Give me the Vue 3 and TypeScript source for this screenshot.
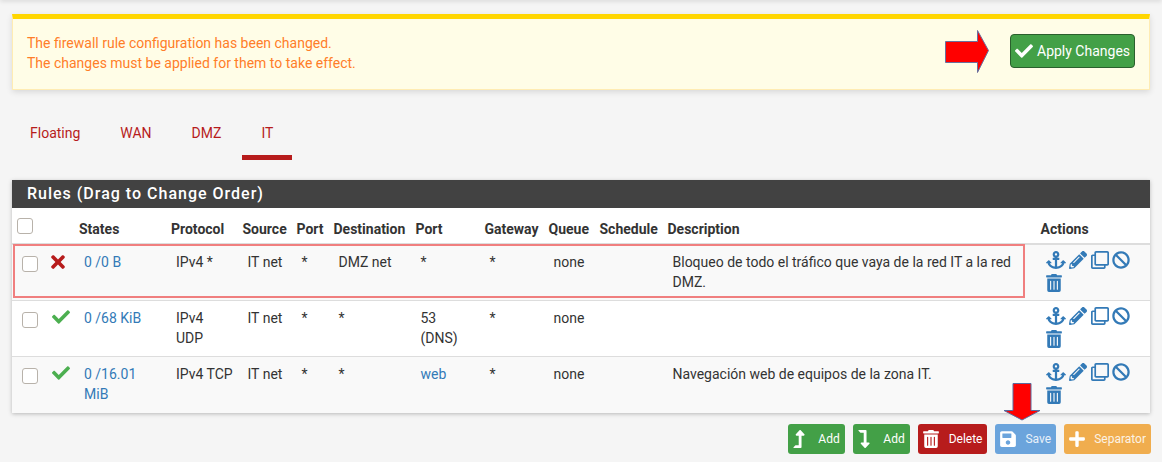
<script setup lang="ts">
const P = {
  check: 'M173.898 439.404l-166.4-166.4c-9.997-9.997-9.997-26.206 0-36.204l36.203-36.204c9.997-10.998 26.207-9.998 36.204 0L192 312.69 432.095 72.596c9.997-9.997 26.207-9.997 36.204 0l36.203 36.204c9.997 9.997 9.997 26.206 0 36.204l-294.4 294.401c-9.998 9.997-26.207 9.997-36.204-.001z',
  times: 'M242.72 256l100.07-100.07c12.28-12.28 12.28-32.19 0-44.48l-22.24-22.24c-12.28-12.28-32.19-12.28-44.48 0L176 189.28 75.93 89.21c-12.28-12.28-32.19-12.28-44.48 0L9.21 111.45c-12.28 12.28-12.28 32.19 0 44.48L109.28 256 9.21 356.07c-12.28 12.28-12.28 32.19 0 44.48l22.24 22.24c12.28 12.28 32.2 12.28 44.48 0L176 322.72l100.07 100.07c12.28 12.28 32.2 12.28 44.48 0l22.24-22.24c12.28-12.28 12.28-32.19 0-44.48L242.72 256z',
  anchor: 'M12.971 352h32.394C67.172 454.735 181.944 512 288 512c106.229 0 220.853-57.38 242.635-160h32.394c10.691 0 16.045-12.926 8.485-20.485l-67.029-67.029c-4.686-4.686-12.284-4.686-16.971 0l-67.029 67.029c-7.56 7.56-2.206 20.485 8.485 20.485h35.146c-20.29 54.317-84.963 86.588-144.117 94.015V256h52c6.627 0 12-5.373 12-12v-40c0-6.627-5.373-12-12-12h-52v-5.47c37.281-13.178 63.995-48.725 64-90.518C384.005 43.772 341.605.738 289.37.01 235.723-.739 192 42.525 192 96c0 41.798 26.716 77.35 64 90.53V192h-52c-6.627 0-12 5.373-12 12v40c0 6.627 5.373 12 12 12h52v190.015c-58.936-7.399-123.82-39.679-144.117-94.015h35.146c10.691 0 16.045-12.926 8.485-20.485l-67.029-67.029c-4.686-4.686-12.284-4.686-16.971 0L4.485 331.515C-3.074 339.074 2.28 352 12.971 352zM288 64c17.645 0 32 14.355 32 32s-14.355 32-32 32-32-14.355-32-32 14.355-32 32-32z',
  pencil: 'M497.9 142.1l-46.1 46.1c-4.7 4.7-12.3 4.7-17 0l-111-111c-4.7-4.7-4.7-12.3 0-17l46.1-46.1c18.7-18.7 49.1-18.7 67.9 0l60.1 60.1c18.8 18.7 18.8 49.1 0 68zM284.2 99.8L21.6 362.4.4 483.9c-2.9 16.4 11.4 30.6 27.8 27.8l121.5-21.3 262.6-262.6c4.7-4.7 4.7-12.3 0-17l-111-111c-4.8-4.7-12.4-4.7-17.1 0zM124.1 339.9c-5.5-5.5-5.5-14.3 0-19.8l154-154c5.5-5.5 14.3-5.5 19.8 0s5.5 14.3 0 19.8l-154 154c-5.5 5.5-14.3 5.5-19.8 0zM88 424h48v36.3l-64.5 11.3-31.1-31.1L51.7 376H88v48z',
  clone: 'M464 0H144c-26.51 0-48 21.49-48 48v48H48c-26.51 0-48 21.49-48 48v320c0 26.51 21.49 48 48 48h320c26.51 0 48-21.49 48-48v-48h48c26.51 0 48-21.49 48-48V48c0-26.51-21.49-48-48-48zM362 464H54a6 6 0 0 1-6-6V150a6 6 0 0 1 6-6h42v224c0 26.51 21.49 48 48 48h224v42a6 6 0 0 1-6 6zm96-96H150a6 6 0 0 1-6-6V54a6 6 0 0 1 6-6h308a6 6 0 0 1 6 6v308a6 6 0 0 1-6 6z',
  ban: 'M256 8C119.034 8 8 119.033 8 256s111.034 248 248 248 248-111.034 248-248S392.967 8 256 8zm130.108 117.892c65.448 65.448 70 165.481 20.677 235.637L150.47 105.216c70.204-49.356 170.226-44.735 235.638 20.676zM125.892 386.108c-65.448-65.448-70-165.481-20.677-235.637L361.53 406.784c-70.203 49.356-170.226 44.736-235.638-20.676z',
  trash: 'M32 464a48 48 0 0 0 48 48h288a48 48 0 0 0 48-48V128H32zm272-256a16 16 0 0 1 32 0v224a16 16 0 0 1-32 0zm-96 0a16 16 0 0 1 32 0v224a16 16 0 0 1-32 0zm-96 0a16 16 0 0 1 32 0v224a16 16 0 0 1-32 0zM432 32H312l-9.4-18.7A24 24 0 0 0 281.1 0H166.8a23.72 23.72 0 0 0-21.4 13.3L136 32H16A16 16 0 0 0 0 48v32a16 16 0 0 0 16 16h416a16 16 0 0 0 16-16V48a16 16 0 0 0-16-16z',
  up: 'M313.553 119.669L209.587 7.666c-9.485-10.214-25.676-10.229-35.174 0L70.438 119.669C56.232 134.969 67.062 160 88.025 160H152v272H68.024a11.996 11.996 0 0 0-8.485 3.515l-56 56C-4.021 499.074 1.333 512 12.024 512h196c13.255 0 24-10.745 24-24V160h63.966c20.878 0 31.851-24.969 17.563-40.331z',
  down: 'M313.553 392.331L209.587 504.334c-9.485 10.214-25.676 10.229-35.174 0L70.438 392.331C56.232 377.031 67.062 352 88.025 352H152V80H68.024a11.996 11.996 0 0 1-8.485-3.515l-56-56C-4.021 12.926 1.333 0 12.024 0h196c13.255 0 24 10.745 24 24v328h63.966c20.878 0 31.851 24.969 17.563 40.331z',
  plus: 'M416 208H272V64c0-17.67-14.33-32-32-32h-32c-17.67 0-32 14.33-32 32v144H32c-17.67 0-32 14.33-32 32v32c0 17.67 14.33 32 32 32h144v144c0 17.67 14.33 32 32 32h32c17.67 0 32-14.33 32-32V304h144c17.67 0 32-14.33 32-32v-32c0-17.67-14.33-32-32-32z',
  save: 'M433.941 129.941l-83.882-83.882A48 48 0 0 0 316.118 32H48C21.49 32 0 53.49 0 80v352c0 26.51 21.49 48 48 48h352c26.51 0 48-21.49 48-48V163.882a48 48 0 0 0-14.059-33.941zM224 416c-35.346 0-64-28.654-64-64 0-35.346 28.654-64 64-64s64 28.654 64 64c0 35.346-28.654 64-64 64zm96-304.52V212c0 6.627-5.373 12-12 12H76c-6.627 0-12-5.373-12-12V108c0-6.627 5.373-12 12-12h228.52c3.183 0 6.235 1.264 8.485 3.515l3.48 3.48A11.996 11.996 0 0 1 320 111.48z',
}

const tabs = ['Floating', 'WAN', 'DMZ', 'IT']
const headers = ['', '', 'States', 'Protocol', 'Source', 'Port', 'Destination', 'Port', 'Gateway', 'Queue', 'Schedule', 'Description', 'Actions']
const widths = [32, 30, 92, 71.5, 54, 37, 82, 69, 64, 51, 68, 373, 114.5]

const rows = [
  { ok: false, states: '0 /0 B', proto: 'IPv4 *', source: 'IT net', sport: '*', dest: 'DMZ net', port: '*', portLink: false, desc: 'Bloqueo de todo el tráfico que vaya de la red IT a la red DMZ.' },
  { ok: true, states: '0 /68 KiB', proto: 'IPv4\nUDP', source: 'IT net', sport: '*', dest: '*', port: '53 (DNS)', portLink: false, desc: '' },
  { ok: true, states: '0 /16.01 MiB', proto: 'IPv4 TCP', source: 'IT net', sport: '*', dest: '*', port: 'web', portLink: true, desc: 'Navegación web de equipos de la zona IT.' },
]
const actions = [
  { path: P.anchor, cls: 'a-anchor', vb: '0 0 576 512' },
  { path: P.pencil, cls: 'a-pencil', vb: '0 0 512 512' },
  { path: P.clone, cls: 'a-clone', vb: '0 0 512 512' },
  { path: P.ban, cls: 'a-ban', vb: '0 0 512 512' },
  { path: P.trash, cls: 'a-trash', vb: '0 0 448 512' },
]
const buttons = [
  { label: 'Add', cls: 'green', path: P.up, vb: '0 0 320 512', ic: 'ic-narrow' },
  { label: 'Add', cls: 'green', path: P.down, vb: '0 0 320 512', ic: 'ic-narrow' },
  { label: 'Delete', cls: 'red', path: P.trash, vb: '0 0 448 512', ic: '' },
  { label: 'Save', cls: 'blue', path: P.save, vb: '0 0 448 512', ic: '' },
  { label: 'Separator', cls: 'orange', path: P.plus, vb: '0 0 448 512', ic: '' },
]
</script>

<template>
  <div class="page">
    <div class="topline"></div>

    <div class="alert">
      <div class="alert-text">
        The firewall rule configuration has been changed.<br />
        The changes must be applied for them to take effect.
      </div>
      <button class="apply" type="button">
        <svg class="apply-icon" viewBox="0 0 512 512"><path :d="P.check" fill="currentColor" /></svg>
        Apply Changes
      </button>
      <svg class="arrow-right" viewBox="0 0 44 44">
        <polygon points="0.5,11.5 32.5,11.5 32.5,0.5 43.5,20.5 32.5,42.5 32.5,32.5 0.5,32.5" fill="#ff0000" stroke="#6a6f9e" stroke-width="1" />
      </svg>
    </div>

    <nav class="tabs">
      <a v-for="t in tabs" :key="t" class="tab" :class="{ active: t === 'IT' }">{{ t }}</a>
    </nav>

    <section class="panel">
      <h2 class="panel-title">Rules (Drag to Change Order)</h2>
      <table class="rules">
        <colgroup>
          <col v-for="(w, i) in widths" :key="i" :style="{ width: w + 'px' }" />
        </colgroup>
        <thead>
          <tr>
            <th v-for="(h, i) in headers" :key="i">
              <span v-if="i === 0" class="cb"></span>
              <template v-else>{{ h }}</template>
            </th>
          </tr>
        </thead>
        <tbody>
          <tr v-for="(r, i) in rows" :key="i">
            <td><span class="cb"></span></td>
            <td class="status">
              <svg v-if="r.ok" class="ok" viewBox="0 0 512 512"><path :d="P.check" fill="currentColor" /></svg>
              <svg v-else class="no" viewBox="0 0 352 512"><path :d="P.times" fill="currentColor" /></svg>
            </td>
            <td><a class="link">{{ r.states }}</a></td>
            <td class="proto">{{ r.proto }}</td>
            <td>{{ r.source }}</td>
            <td>{{ r.sport }}</td>
            <td>{{ r.dest }}</td>
            <td><a v-if="r.portLink" class="link">{{ r.port }}</a><template v-else>{{ r.port }}</template></td>
            <td>*</td>
            <td>none</td>
            <td></td>
            <td>{{ r.desc }}</td>
            <td class="actions-cell">
              <div class="actions">
                <svg v-for="a in actions" :key="a.cls" class="action" :class="a.cls" :viewBox="a.vb"><path :d="a.path" fill="currentColor" /></svg>
              </div>
            </td>
          </tr>
        </tbody>
      </table>
      <div class="highlight"></div>
    </section>

    <div class="buttons">
      <button v-for="(b, i) in buttons" :key="i" class="btn" :class="b.cls" type="button">
        <svg class="btn-icon" :class="b.ic" :viewBox="b.vb"><path :d="b.path" fill="currentColor" /></svg>
        <span>{{ b.label }}</span>
      </button>
      <svg class="arrow-down" viewBox="0 0 38 38">
        <polygon points="10,0.5 28,0.5 28,27.5 37,27.5 19,37 1,27.5 10,27.5" fill="#ff0000" stroke="#5a6a9e" stroke-width="1" />
      </svg>
    </div>
  </div>
</template>

<style>
html, body { margin: 0; background: #f5f5f5; }
</style>

<style scoped>
.page {
  width: 1162px;
  height: 462px;
  box-sizing: border-box;
  position: relative;
  overflow: hidden;
  padding: 14px 12px 0;
  background: #f5f5f5;
  font-family: Roboto, "Liberation Sans", sans-serif;
  font-size: 14px;
  line-height: 20px;
  color: #333;
}
.topline {
  position: absolute;
  left: 0;
  right: 0;
  top: -4px;
  height: 4px;
  box-shadow: 0 1px 5px rgba(0, 0, 0, 0.14);
}
.alert {
  position: relative;
  box-sizing: border-box;
  height: 76px;
  display: flex;
  align-items: center;
  justify-content: space-between;
  padding: 0 15px 6px;
  background: #fffde7;
  border-top: 5px solid #ffd600;
  border-bottom: 1px solid #ffecb3;
  border-left: 1px solid #ffecb3;
  border-right: 1px solid #ffecb3;
  color: #ff7d29;
  box-shadow: 0 2px 6px rgba(0, 0, 0, 0.12);
}
.alert-text { margin-top: 4px; margin-left: -1px; }
.apply {
  box-sizing: border-box;
  width: 125px;
  height: 34px;
  margin-right: -1px;
  padding: 0 0 0 4px;
  display: flex;
  align-items: center;
  gap: 4px;
  font: inherit;
  color: #fff;
  background: #43a047;
  border: 1px solid #2b5f2d;
  border-radius: 4px;
}
.apply-icon { width: 18px; height: 18px; flex: none; }
.arrow-right {
  position: absolute;
  left: 932px;
  top: 11px;
  width: 44px;
  height: 44px;
}
.tabs {
  display: flex;
  height: 65px;
  padding-top: 5px;
  margin-left: -2px;
}
.tab {
  box-sizing: border-box;
  padding: 28px 20px 0;
  height: 65px;
  color: #b71c1c;
}
.tab.active { position: relative; }
.tab.active::after {
  content: "";
  position: absolute;
  left: 1px;
  right: 1px;
  bottom: 0;
  height: 5px;
  background: #b71c1c;
}
.panel {
  position: relative;
  margin-top: 20px;
  background: #fff;
  box-shadow: 0 1px 4px rgba(0, 0, 0, 0.25);
}
.panel-title {
  margin: 0;
  height: 28px;
  padding-left: 15px;
  background: #424242;
  color: #fff;
  font-size: 16px;
  font-weight: 500;
  line-height: 28px;
  letter-spacing: 1px;
}
.rules {
  width: 1138px;
  border-collapse: collapse;
  table-layout: fixed;
}
th {
  box-sizing: border-box;
  height: 36px;
  padding: 7px 0 0 5px;
  font-weight: 700;
  text-align: left;
  vertical-align: middle;
  white-space: nowrap;
  border-bottom: 2px solid #ddd;
  color: #333;
}
th:first-child { vertical-align: top; padding-top: 10px; }
td {
  box-sizing: border-box;
  height: 56px;
  padding: 7px 5px 8px 10px;
  vertical-align: top;
  border-top: 1px solid #ddd;
}
td.proto { padding-right: 0; white-space: pre-line; }
tbody tr:nth-child(odd) { background: #f9f9f9; }
.cb {
  display: block;
  box-sizing: border-box;
  width: 16px;
  height: 16px;
  margin-top: 4px;
  background: #fff;
  border: 1px solid #b8b2aa;
  border-radius: 3px;
}
th .cb { margin-top: 0; }
.status { padding-left: 7px; padding-right: 0; }
.ok { display: block; width: 18px; height: 18px; margin-top: 0; margin-left: 1px; color: #4caf50; }
.no { display: block; width: 14px; height: 20px; margin-top: 0; color: #b71c1c; }
.link { color: #337ab7; }
.actions-cell { padding: 6px 0 0 10px; }
.actions {
  display: flex;
  flex-wrap: wrap;
  width: 90px;
  column-gap: 3px;
  row-gap: 5px;
}
.action { height: 18px; width: 18px; display: block; color: #337ab7; }
.a-anchor { width: 20px; }
.a-clone { margin-left: 1px; }
.a-trash { margin-left: -1px; }
.highlight {
  position: absolute;
  left: 1px;
  top: 64px;
  width: 1012px;
  height: 54px;
  box-sizing: border-box;
  border: 2px solid #f07f7f;
  pointer-events: none;
}
.buttons {
  display: flex;
  justify-content: flex-end;
  gap: 8px;
  margin-top: 11px;
  margin-right: -1px;
}
.btn {
  box-sizing: border-box;
  height: 30px;
  padding: 0 5px;
  display: flex;
  align-items: center;
  gap: 9px;
  font: inherit;
  font-size: 12px;
  color: #fff;
  border: none;
  border-radius: 3px;
}
.btn-icon { width: 16px; height: 18px; flex: none; }
.btn-icon.ic-narrow { width: 12px; margin-right: 4px; }
.red { gap: 10px; }
.green { background: #43a047; gap: 9.6px; }
.red { background: #b71c1c; }
.blue { background: #6ba4dc; }
.orange { background: #f0ad4e; }
.blue span, .orange span { opacity: 0.85; }
.arrow-down {
  position: absolute;
  left: 1003px;
  top: 383px;
  width: 38px;
  height: 38px;
}
</style>
